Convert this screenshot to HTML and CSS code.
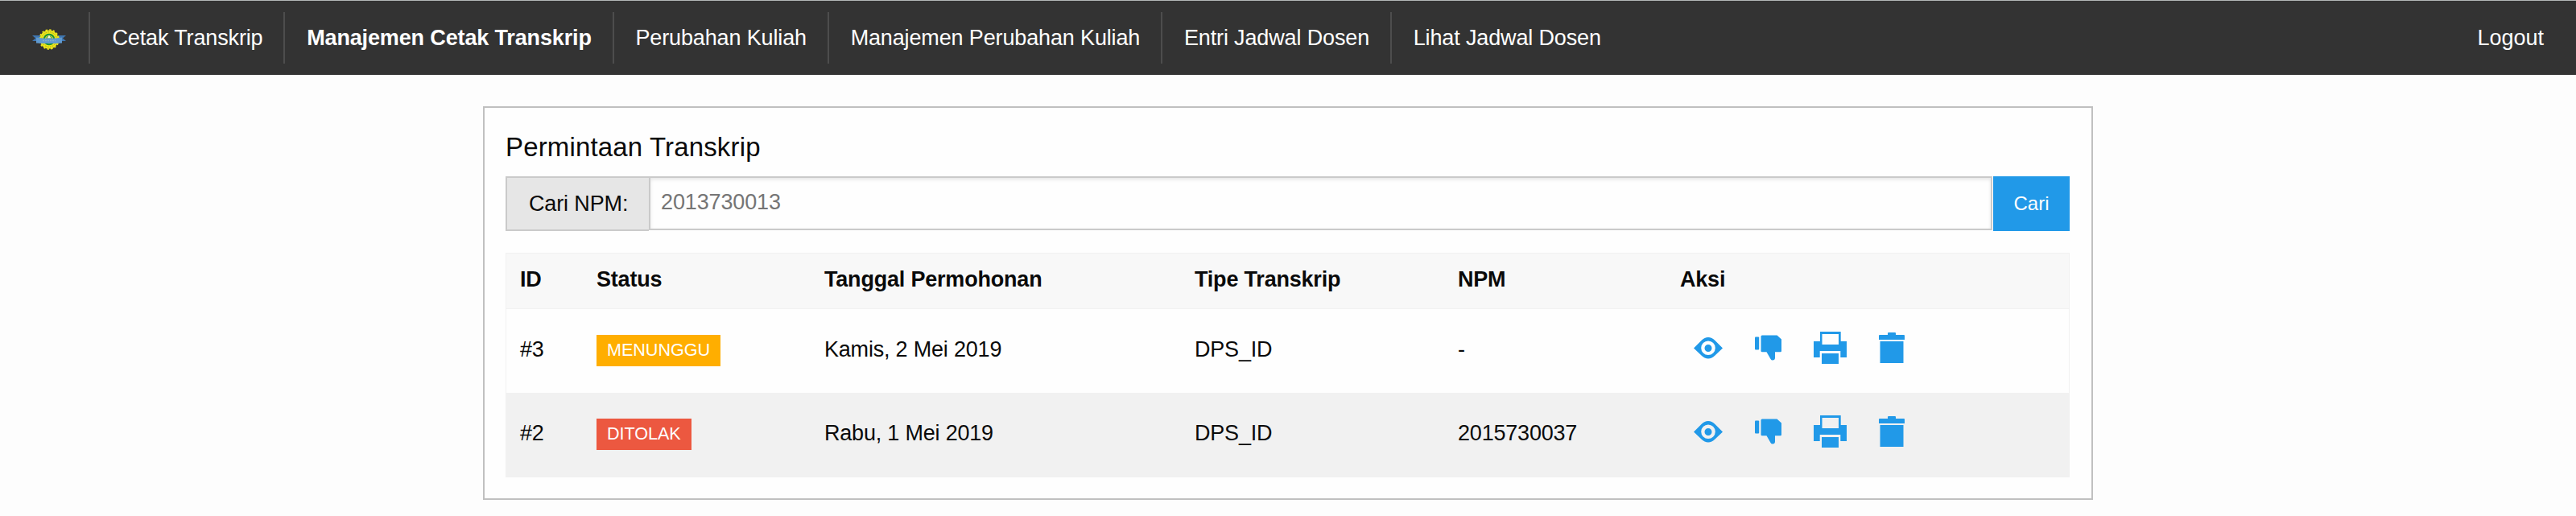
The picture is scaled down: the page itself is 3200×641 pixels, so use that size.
FILE: index.html
```html
<!DOCTYPE html>
<html lang="id">
<head>
<meta charset="utf-8">
<title>Manajemen Cetak Transkrip</title>
<link rel="stylesheet" href="styles.css">
</head>
<body>
<svg class="sprite" aria-hidden="true">
  <symbol id="eye" viewBox="0 0 36 27"><path fill-rule="evenodd" d="M0 13.5 9.5 4Q13.500 0 18 0T26.500 4L36 13.500 26.500 22.500Q22.500 26.500 18 26.500T9.500 22.500ZM18 4.500a8.800 8.800 0 1 0 0 17.600a8.800 8.800 0 1 0 0-17.600ZM18 9a4.500 4.500 0 1 1 0 9a4.500 4.500 0 1 1 0-9Z"/></symbol>
  <symbol id="thumb" viewBox="0 0 33 32"><rect y="2.500" width="5.200" height="16" rx="1"/><path d="M9 .500H27.500L33 5.500V20Q33 21.300 31.700 21.300H25V28.500Q25 31.500 22 31.500Q20.300 31.500 19.500 30L14.500 21.300H9Q7.500 21.300 7.500 20V2Q7.500 .500 9 .500Z"/></symbol>
  <symbol id="printer" viewBox="0 0 41 40"><path fill-rule="evenodd" d="M8 0H33.700V12H41V32H33.300V24H7.700V32H0V12H8ZM10.500 3V16H31V3Z"/><path d="M10 27H31V40H10Z"/></symbol>
  <symbol id="trash" viewBox="0 0 32 38"><path d="M1 3H11V1Q11 0 12 0H20Q21 0 21 1V3H31Q32 3 32 4V9H0V4Q0 3 1 3ZM1.500 11H30.500V38H1.500Z"/></symbol>
</svg>
<nav class="topbar">
  <ul class="menu">
    <li class="brand"><svg class="logo" viewBox="0 0 42 26">
      <path d="M0 8H10V15H0L4 11.500ZM42 8H32V15H42L38 11.500Z" fill="#3f76b0"/>
      <circle cx="21" cy="13" r="11.500" fill="#ece61a"/>
      <circle cx="21" cy="13" r="12" fill="none" stroke="#ece61a" stroke-width="1.600" stroke-dasharray="2.400 2.300"/>
      <circle cx="21" cy="13" r="9.300" fill="none" stroke="#a3a11c" stroke-width="1" stroke-dasharray="1.500 1.500"/>
      <circle cx="21" cy="13" r="6.300" fill="#e0df30" stroke="#16903a" stroke-width="2"/>
      <circle cx="21" cy="12" r="3.500" fill="#4c9c4a"/>
      <path d="M18.500 11.500 21 7.500 23.500 11.500Z" fill="#f3f5d8"/>
      <path d="M5 10.500Q21 13 37 10.500V17.500Q21 18.500 5 17.500Z" fill="#609ad0"/>
      <path d="M13 14.500H29" stroke="#86b1c9" stroke-width="1.500" stroke-dasharray="2 1"/>
    </svg></li>
    <li class="first">Cetak Transkrip</li>
    <li class="active">Manajemen Cetak Transkrip</li>
    <li>Perubahan Kuliah</li>
    <li>Manajemen Perubahan Kuliah</li>
    <li>Entri Jadwal Dosen</li>
    <li>Lihat Jadwal Dosen</li>
  </ul>
  <div class="logout">Logout</div>
</nav>
<main class="card">
  <h1>Permintaan Transkrip</h1>
  <form class="search">
    <label for="npm">Cari NPM:</label>
    <input id="npm" type="text" placeholder="2013730013">
    <button type="button">Cari</button>
  </form>
  <table>
    <colgroup><col class="c-id"><col class="c-status"><col class="c-date"><col class="c-type"><col class="c-npm"><col></colgroup>
    <thead><tr><th>ID</th><th>Status</th><th>Tanggal Permohonan</th><th>Tipe Transkrip</th><th>NPM</th><th>Aksi</th></tr></thead>
    <tbody>
      <tr><td>#3</td><td><span class="badge wait">MENUNGGU</span></td><td>Kamis, 2 Mei 2019</td><td>DPS_ID</td><td>-</td>
        <td><div class="actions"><svg class="eye"><use href="#eye"/></svg><svg class="thumb"><use href="#thumb"/></svg><svg class="printer"><use href="#printer"/></svg><svg class="trash"><use href="#trash"/></svg></div></td></tr>
      <tr><td>#2</td><td><span class="badge reject">DITOLAK</span></td><td>Rabu, 1 Mei 2019</td><td>DPS_ID</td><td>2015730037</td>
        <td><div class="actions"><svg class="eye"><use href="#eye"/></svg><svg class="thumb"><use href="#thumb"/></svg><svg class="printer"><use href="#printer"/></svg><svg class="trash"><use href="#trash"/></svg></div></td></tr>
    </tbody>
  </table>
</main>
</body>
</html>
```
FILE: styles.css
```css
* { box-sizing: border-box; }
body {
  margin: 0;
  height: 641px;
  overflow: hidden;
  background: #fdfdfd;
  color: #0a0a0a;
  font: 27px/40px "Liberation Sans", Arial, sans-serif;
  letter-spacing: -.14px;
}
.sprite { display: none; }
.topbar {
  display: flex;
  justify-content: space-between;
  height: 93px;
  padding: 13px 40px 14px 40px;
  border-top: 1px solid #b3b7b7;
  background: #333;
  color: #fff;
}
.menu {
  display: flex;
  margin: 0;
  padding: 0;
  list-style: none;
}
.menu li {
  height: 64px;
  margin-top: 1px;
  padding: 12px 26px 0 26.700px;
  border-right: 2px solid #4d4d4d;
  white-space: nowrap;
}
.menu li:last-child { border-right: 0; }
.menu .brand { width: 72px; padding: 21px 0 0; }
.menu .first { padding-left: 27.500px; }
.logo { display: block; width: 42px; height: 26px; overflow: visible; }
.active { font-weight: bold; }
.logout { padding-top: 13px; letter-spacing: 0; }
.card {
  width: 2000px;
  height: 489px;
  margin: 39px auto 0;
  padding: 26px;
  border: 2px solid #c0c0c0;
  background: #fefefe;
}
h1 {
  margin: 0 0 13px;
  font-size: 33px;
  font-weight: normal;
  line-height: 46px;
  letter-spacing: .15px;
}
.search {
  display: flex;
  align-items: flex-start;
  width: 1943px;
  height: 68px;
  margin-bottom: 27px;
}
.search label {
  width: 178px;
  height: 68px;
  padding: 12px 0 0 27px;
  border: 2px solid #cacaca;
  border-right: 0;
  background: #e6e6e6;
}
.search input {
  flex: 1;
  height: 67px;
  margin: 0 1px 0 0;
  padding: 0 13px 2px;
  border: 2px solid #cacaca;
  border-radius: 0;
  background: #fefefe;
  box-shadow: inset 0 2px 4px rgba(10, 10, 10, .1);
  font: inherit;
  letter-spacing: -.14px;
}
.search input::placeholder { color: #757575; }
.search button {
  width: 95px;
  height: 68px;
  padding: 0;
  border: 0;
  background: #2199e8;
  color: #fefefe;
  font: 24px "Liberation Sans", Arial, sans-serif;
}
table {
  width: 1943px;
  table-layout: fixed;
  border-collapse: separate;
  border-spacing: 0;
  border: 1px solid #f1f1f1;
  letter-spacing: -.2px;
}
.c-id { width: 95px; }
.c-status { width: 283px; }
.c-date { width: 460px; }
.c-type { width: 327px; }
.c-npm { width: 276px; }
th, td { padding: 0 0 0 17px; text-align: left; }
th {
  height: 69px;
  padding-bottom: 4px;
  border-bottom: 1px solid #f1f1f1;
  background: #f8f8f8;
}
td { height: 104px; vertical-align: top; padding-top: 29.500px; }
tbody tr:nth-child(2) { background: #f1f1f1; }
.badge {
  display: block;
  width: max-content;
  height: 39px;
  margin-top: 2.500px;
  padding: 0 13px;
  color: #fefefe;
  font-size: 21.600px;
  line-height: 37px;
  letter-spacing: -.04px;
}
.wait { background: #ffae00; }
.reject { background: #ec5840; }
.actions {
  display: flex;
  align-items: center;
  height: 40px;
  margin-top: -1.500px;
  padding-left: 17px;
  fill: #2199e8;
}
.eye { width: 36px; height: 27px; margin-right: 40px; }
.thumb { width: 33px; height: 32px; margin-right: 40px; }
.printer { width: 41px; height: 40px; margin-right: 40px; }
.trash { width: 32px; height: 38px; }
```
